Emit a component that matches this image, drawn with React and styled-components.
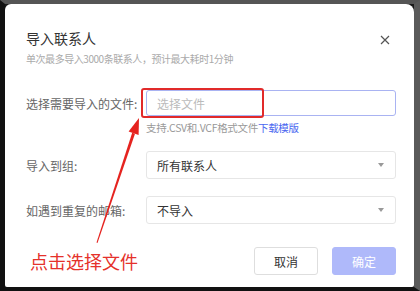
import React from "react";
import styled, { createGlobalStyle } from "styled-components";

const Global = createGlobalStyle`
  html, body { margin: 0; padding: 0; background: #111; }
  body { font-family: "Noto Sans CJK SC", "Noto Sans", sans-serif; }
  * { box-sizing: border-box; }
`;

const Frame = styled.div`
  width: 420px;
  height: 291px;
  background: #1a1a1a;
  border-top: 4px solid #555;
  border-right: 6px solid #5a5a5a;
  border-left: 5px solid #111;
  border-bottom: 4px solid #111;
  display: flex;
`;

const Dialog = styled.div`
  position: relative;
  flex: 1;
  background: #fff;
  border-radius: 6px 8px 2px 2px;
  padding: 24px 18px 12px 21px;
  display: flex;
  flex-direction: column;
`;

const Header = styled.div`
  display: flex;
  flex-direction: column;
`;

const Title = styled.div`
  font-size: 14px;
  line-height: 20px;
  color: #333;
`;

const Subtitle = styled.div`
  margin-top: 3px;
  font-size: 10px;
  letter-spacing: -0.45px;
  line-height: 16px;
  color: #aaa;
`;

const Close = styled.button`
  position: absolute;
  top: 29px;
  right: 22px;
  width: 14px;
  height: 14px;
  padding: 0;
  border: none;
  background: none;
  display: flex;
  align-items: center;
  justify-content: center;
`;

const Form = styled.div`
  margin-top: 23px;
  display: flex;
  flex-direction: column;
`;

const Row = styled.div`
  display: flex;
  align-items: center;
  margin-top: ${(p) => p.$gap || 0}px;
`;

const Label = styled.div`
  width: 120px;
  flex: none;
  font-size: 12px;
  color: #666;
`;

const Field = styled.div`
  position: relative;
  flex: 1;
  height: ${(p) => p.$h}px;
  border: 1px solid ${(p) => (p.$focus ? "#a9b3f2" : "#e6e6e6")};
  border-radius: 3px;
  display: flex;
  align-items: center;
  justify-content: space-between;
  padding: 0 10px 0 10px;
  font-size: 12px;
  color: ${(p) => (p.$placeholder ? "#bbb" : "#333")};
`;

const Highlight = styled.div`
  position: absolute;
  left: -6px;
  top: -3px;
  width: 123px;
  height: 30px;
  border: 2px solid #e12a2a;
  border-radius: 3px;
`;

const Caret = styled.span`
  width: 0;
  height: 0;
  border-left: 3.5px solid transparent;
  border-right: 3.5px solid transparent;
  border-top: 4px solid #999;
  margin-right: 1px;
`;

const Helper = styled.div`
  margin-top: 4px;
  margin-left: 120px;
  font-size: 10.5px;
  letter-spacing: -0.3px;
  line-height: 16px;
  color: #999;
`;

const Link = styled.span`
  color: #4a66f0;
`;

const Footer = styled.div`
  margin-top: auto;
  display: flex;
  align-items: center;
  justify-content: space-between;
`;

const Note = styled.div`
  margin-left: 4px;
  font-size: 18px;
  color: #e5312b;
`;

const Buttons = styled.div`
  display: flex;
  gap: 14px;
`;

const Button = styled.button`
  width: 64px;
  height: 28px;
  border-radius: 3px;
  font-family: inherit;
  font-size: 12px;
  border: 1px solid ${(p) => (p.$primary ? "#afb9fa" : "#dedede")};
  background: ${(p) => (p.$primary ? "#afb9fa" : "#fff")};
  color: ${(p) => (p.$primary ? "#fff" : "#333")};
`;

const Overlay = styled.svg`
  position: absolute;
  left: -5px;
  top: -4px;
  width: 420px;
  height: 291px;
  pointer-events: none;
`;

export default function App() {
  return (
    <>
      <Global />
      <Frame>
        <Dialog>
          <Header>
            <Title>导入联系人</Title>
            <Subtitle>单次最多导入3000条联系人，预计最大耗时1分钟</Subtitle>
          </Header>
          <Close aria-label="关闭">
            <svg width="10" height="10" viewBox="0 0 10 10">
              <path d="M1 1L9 9M9 1L1 9" stroke="#555" strokeWidth="1.2" />
            </svg>
          </Close>
          <Form>
            <Row>
              <Label>选择需要导入的文件:</Label>
              <Field $h={26} $focus $placeholder>
                选择文件
                <Highlight />
              </Field>
            </Row>
            <Helper>
              支持.CSV和.VCF格式文件<Link>下载模版</Link>
            </Helper>
            <Row $gap={15}>
              <Label>导入到组:</Label>
              <Field $h={28}>
                所有联系人
                <Caret />
              </Field>
            </Row>
            <Row $gap={17}>
              <Label>如遇到重复的邮箱:</Label>
              <Field $h={28}>
                不导入
                <Caret />
              </Field>
            </Row>
          </Form>
          <Footer>
            <Note>点击选择文件</Note>
            <Buttons>
              <Button>取消</Button>
              <Button $primary>确定</Button>
            </Buttons>
          </Footer>
          <Overlay viewBox="0 0 420 291">
            <polygon points="97.5,243 96.5,242.6 132.2,132.8 135,133.8" fill="#e5231f" />
            <polygon points="139,118 138.6,135 128.6,131.6" fill="#e5231f" />
          </Overlay>
        </Dialog>
      </Frame>
    </>
  );
}
